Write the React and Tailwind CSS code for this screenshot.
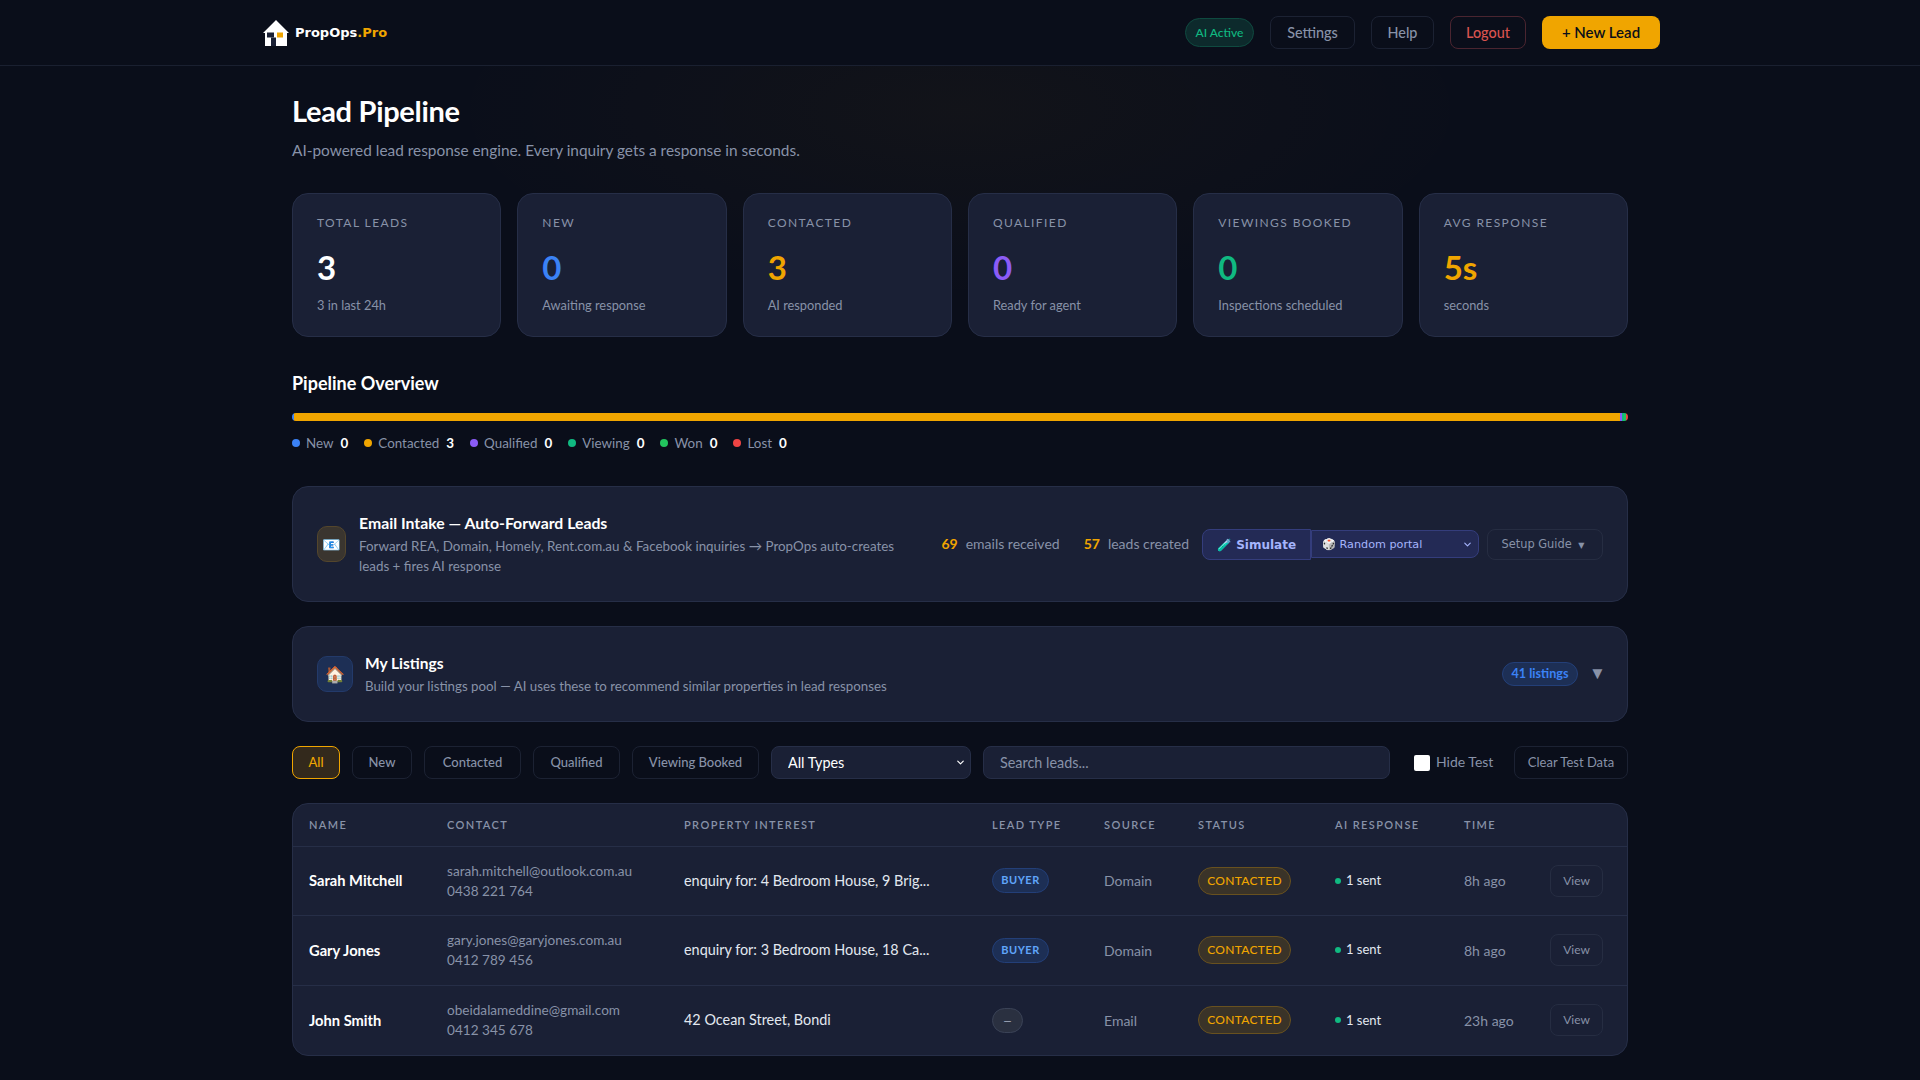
import React from "react";
import { ChevronDown } from "lucide-react";

const stats = [
  { label: "Total Leads", value: "3", sub: "3 in last 24h", color: "text-white" },
  { label: "New", value: "0", sub: "Awaiting response", color: "text-[#3b82f6]" },
  { label: "Contacted", value: "3", sub: "AI responded", color: "text-[#f0a500]" },
  { label: "Qualified", value: "0", sub: "Ready for agent", color: "text-[#8b5cf6]" },
  { label: "Viewings Booked", value: "0", sub: "Inspections scheduled", color: "text-[#10b981]" },
  { label: "Avg Response", value: "5s", sub: "seconds", color: "text-[#f0a500]" },
];

const legend = [
  { name: "New", n: 0, dot: "bg-[#3b82f6]" },
  { name: "Contacted", n: 3, dot: "bg-[#f0a500]" },
  { name: "Qualified", n: 0, dot: "bg-[#8b5cf6]" },
  { name: "Viewing", n: 0, dot: "bg-[#10b981]" },
  { name: "Won", n: 0, dot: "bg-[#22c55e]" },
  { name: "Lost", n: 0, dot: "bg-[#ef4444]" },
];

const leads = [
  { name: "Sarah Mitchell", email: "sarah.mitchell@outlook.com.au", phone: "0438 221 764", prop: "enquiry for: 4 Bedroom House, 9 Brig...", type: "BUYER", source: "Domain", time: "8h ago", h: "h-[69px]" },
  { name: "Gary Jones", email: "gary.jones@garyjones.com.au", phone: "0412 789 456", prop: "enquiry for: 3 Bedroom House, 18 Ca...", type: "BUYER", source: "Domain", time: "8h ago", h: "h-[70px]" },
  { name: "John Smith", email: "obeidalameddine@gmail.com", phone: "0412 345 678", prop: "42 Ocean Street, Bondi", type: "—", source: "Email", time: "23h ago", h: "h-[70px]" },
];

const heads = ["Name", "Contact", "Property Interest", "Lead Type", "Source", "Status", "AI Response", "Time", ""];

function Logo() {
  return (
    <svg width="26" height="26" viewBox="0 0 26 26" className="ml-[3px] shrink-0">
      <path d="M13 0 L26 13 L24 13 L24 26 L2 26 L2 13 L0 13 Z" fill="#ffffff" />
      <rect x="4" y="12.5" width="7" height="5" fill="#1a2035" />
      <rect x="8" y="17.5" width="5" height="8.5" fill="#1a2035" />
      <rect x="14" y="12.5" width="6" height="5" fill="#f0a500" />
    </svg>
  );
}

function Card({ children, className }) {
  return <div className={"rounded-2xl border border-[#262e47] bg-[#1a2035] " + className}>{children}</div>;
}

export default function App() {
  return (
    <div className="h-screen overflow-hidden bg-[#0a0e1a] bg-[radial-gradient(ellipse_520px_190px_at_50%_110px,rgba(240,165,0,0.035),transparent)] text-white [font-family:Lato,sans-serif]">
      <header className="h-[66px] border-b border-[#1a2030] bg-[#0a0e1a]">
        <div className="mx-auto flex h-full max-w-[1400px] items-center justify-between">
          <div className="flex items-center gap-[6px]">
            <Logo />
            <span className="mt-[1px] text-[13px] font-bold text-white [font-family:'DejaVu_Sans',sans-serif]">
              PropOps<span className="text-[#f0a500]">.Pro</span>
            </span>
          </div>
          <div className="flex items-center gap-4">
            <span className="flex h-[29px] w-[69px] items-center justify-center rounded-full border border-[#0f4a40] bg-[#0d2a2c] text-[12px] font-medium text-[#10b981]">AI Active</span>
            <button className="h-[33px] w-[85px] rounded-lg border border-[#1c2233] text-[14.4px] font-medium text-[#8892a8]">Settings</button>
            <button className="h-[33px] w-[63px] rounded-lg border border-[#1c2233] text-[14.4px] font-medium text-[#8892a8]">Help</button>
            <button className="h-[33px] w-[76px] rounded-lg border border-[#4a2530] text-[14.4px] font-medium text-[#d9534f]">Logout</button>
            <button className="h-[33px] w-[118px] rounded-lg bg-[#f0a500] text-[15px] font-semibold text-[#0a0e1a]">+ New Lead</button>
          </div>
        </div>
      </header>

      <main className="mx-auto max-w-[1400px] px-8">
        <h1 className="mt-[27px] text-[29px] font-bold leading-[36px] tracking-[-0.3px]">Lead Pipeline</h1>
        <p className="mt-[10px] text-[15.4px] leading-[22px] text-[#8892a8]">AI-powered lead response engine. Every inquiry gets a response in seconds.</p>

        <section className="mt-[32px] grid grid-cols-6 gap-4">
          {stats.map((s) => (
            <Card key={s.label} className="h-[144px] px-6 pt-[21px]">
              <div className="text-[12px] uppercase leading-[16px] tracking-[1.4px] text-[#8892a8]">{s.label}</div>
              <div className={"mt-[14px] text-[33px] font-bold leading-[44px] " + s.color}>{s.value}</div>
              <div className="mt-[7px] text-[12.8px] leading-[18px] text-[#8892a8]">{s.sub}</div>
            </Card>
          ))}
        </section>

        <h2 className="mt-[33px] text-[18px] font-bold leading-[26px]">Pipeline Overview</h2>
        <div className="mt-[17px] flex h-2 overflow-hidden rounded-full">
          <div className="w-[2px] bg-[#3b82f6]" />
          <div className="flex-1 bg-[#f0a500]" />
          <div className="w-[2px] bg-[#8b5cf6]" />
          <div className="w-[2px] bg-[#10b981]" />
          <div className="w-[2px] bg-[#22c55e]" />
          <div className="w-[2px] bg-[#ef4444]" />
        </div>
        <div className="mt-[12px] flex gap-4 text-[13.4px] leading-[20px]">
          {legend.map((l) => (
            <div key={l.name} className="flex items-center gap-[6px]">
              <span className={"size-2 rounded-full " + l.dot} />
              <span className="text-[#8892a8]">{l.name}</span>
              <span className="ml-[1px] font-bold text-white">{l.n}</span>
            </div>
          ))}
        </div>

        <Card className="mt-[33px] flex h-[116px] items-center gap-[13px] px-6">
          <div className="flex h-9 w-[29px] shrink-0 items-center justify-center rounded-[10px] border border-[#54462c] bg-[#3a352f] text-[15px]">📧</div>
          <div className="w-[540px] shrink-0">
            <div className="text-[15.8px] font-bold leading-[20px]">Email Intake — Auto-Forward Leads</div>
            <div className="mt-[3px] text-[13.4px] leading-[20px] text-[#8892a8]">Forward REA, Domain, Homely, Rent.com.au &amp; Facebook inquiries → PropOps auto-creates leads + fires AI response</div>
          </div>
          <div className="mb-[2px] ml-auto flex items-center gap-2 text-[14px]">
            <span className="font-bold text-[#f0a500]">69</span>
            <span className="text-[#8892a8]">emails received</span>
          </div>
          <div className="mb-[2px] ml-[11px] flex items-center gap-2 text-[14px]">
            <span className="font-bold text-[#f0a500]">57</span>
            <span className="text-[#8892a8]">leads created</span>
          </div>
          <div className="flex items-center">
            <button className="h-[31px] w-[109px] rounded-l-lg border border-[#343d7c] bg-[#232a55] pt-[1px] text-[12px] font-bold text-[#a5b4fc] [font-family:'DejaVu_Sans',sans-serif]">🧪 Simulate</button>
            <div className="relative">
              <select className="block h-[28px] w-[168px] appearance-none rounded-r-lg border border-[#343d7c] bg-[#232a55] pl-[10px] pt-[2px] text-[11.2px] text-[#a5b4fc] [font-family:'DejaVu_Sans',sans-serif]">
                <option>🎲 Random portal</option>
              </select>
              <ChevronDown size={11} strokeWidth={2.5} className="pointer-events-none absolute right-[6px] top-[9px] text-[#a5b4fc]" />
            </div>
          </div>
          <button className="-ml-[5px] h-[31px] w-[116px] rounded-lg border border-[#262d42] pr-[4px] pt-[1px] text-[11.4px] text-[#8892a8] [font-family:'DejaVu_Sans',sans-serif]">Setup Guide <span className="ml-[3px] text-[8px]">▼</span></button>
        </Card>

        <Card className="mt-[24px] flex h-[96px] items-center gap-3 px-6">
          <div className="flex size-9 shrink-0 items-center justify-center rounded-[10px] border border-[#233a6a] bg-[#1d2f55] text-[16px]">🏠</div>
          <div className="min-w-0 flex-1">
            <div className="text-[15.5px] font-bold leading-[20px]">My Listings</div>
            <div className="mt-[3px] text-[13.3px] leading-[20px] text-[#8892a8]">Build your listings pool — AI uses these to recommend similar properties in lead responses</div>
          </div>
          <span className="flex h-[24px] w-[76px] items-center justify-center rounded-full border border-[#233f78] bg-[#1d2f55] text-[12.6px] font-bold text-[#3b82f6]">41 listings</span>
          <span className="mb-[3px] ml-[2px] flex w-[11px] justify-center text-[17px] text-[#8892a8]">▼</span>
        </Card>

        <div className="mt-[24px] flex h-[33px] items-center gap-3">
          <button className="h-[33px] w-[48px] rounded-lg border border-[#f0a500] bg-[#33291c] text-[13px] font-medium text-[#f0a500]">All</button>
          <button className="h-[33px] w-[60px] rounded-lg border border-[#1c2233] text-[13px] font-medium text-[#8892a8]">New</button>
          <button className="h-[33px] w-[97px] rounded-lg border border-[#1c2233] text-[13px] font-medium text-[#8892a8]">Contacted</button>
          <button className="h-[33px] w-[87px] rounded-lg border border-[#1c2233] text-[13px] font-medium text-[#8892a8]">Qualified</button>
          <button className="h-[33px] w-[127px] rounded-lg border border-[#1c2233] text-[13px] font-medium text-[#8892a8]">Viewing Booked</button>
          <div className="relative">
            <select className="block h-[33px] w-[200px] appearance-none rounded-lg border border-[#262e47] bg-[#1a2035] pl-4 text-[14.4px] text-white">
              <option>All Types</option>
            </select>
            <ChevronDown size={11} strokeWidth={2.5} className="pointer-events-none absolute right-[5px] top-[11px] text-white" />
          </div>
          <input placeholder="Search leads..." className="h-[33px] w-[407px] rounded-lg border border-[#262e47] bg-[#1a2035] px-4 text-[14.4px] text-white placeholder:text-[#8892a8]" />
          <label className="ml-[12px] flex items-center gap-[6px] whitespace-nowrap text-[14px] text-[#8892a8]">
            <input type="checkbox" className="size-4 appearance-none rounded-[2px] bg-white" />
            <span className="-mt-[2px]">Hide Test</span>
          </label>
          <button className="ml-auto h-[33px] w-[114px] shrink-0 rounded-lg border border-[#1c2233] pt-[1px] text-[13px] text-[#8892a8]">Clear Test Data</button>
        </div>

        <div className="mt-[24px] overflow-hidden rounded-2xl border border-[#262e47] bg-[#1a2035]">
          <table className="w-full table-fixed border-collapse">
            <colgroup>
              <col className="w-[138px]" />
              <col className="w-[237px]" />
              <col className="w-[308px]" />
              <col className="w-[112px]" />
              <col className="w-[94px]" />
              <col className="w-[137px]" />
              <col className="w-[129px]" />
              <col className="w-[86px]" />
              <col />
            </colgroup>
            <thead>
              <tr className="h-[42px] border-b border-[#262e47]">
                {heads.map((h, i) => (
                  <th key={i} className="px-4 text-left text-[11px] font-semibold uppercase tracking-[1.4px] text-[#8892a8]">{h}</th>
                ))}
              </tr>
            </thead>
            <tbody>
              {leads.map((l, i) => (
                <tr key={l.name} className={l.h + (i < 2 ? " border-b border-[#262e47]" : "")}>
                  <td className="whitespace-nowrap px-4 text-[14.7px] font-bold">{l.name}</td>
                  <td className="whitespace-nowrap px-4 text-[13.6px] leading-[20px] text-[#8892a8]">
                    <div>{l.email}</div>
                    <div>{l.phone}</div>
                  </td>
                  <td className="whitespace-nowrap px-4 text-[14.4px] text-[#e2e8f0]">{l.prop}</td>
                  <td className="px-4">
                    {l.type === "BUYER" ? (
                      <span className="flex h-[25px] w-[57px] items-center justify-center rounded-full border border-[#233f78] bg-[#1d2f55] text-[11px] font-bold tracking-[0.5px] text-[#60a5fa]">BUYER</span>
                    ) : (
                      <span className="flex h-[25px] w-[31px] items-center justify-center rounded-full border border-[#3a4256] bg-[#2a3040] text-[10px] font-bold text-[#a0a8ba]">—</span>
                    )}
                  </td>
                  <td className="px-4 text-[14px] text-[#8892a8]">{l.source}</td>
                  <td className="px-4">
                    <span className="flex h-[28px] w-[93px] items-center justify-center rounded-full border border-[#68511f] bg-[#3a3328] text-[12px] font-medium tracking-[0.3px] text-[#f0a500]">CONTACTED</span>
                  </td>
                  <td className="px-4">
                    <div className="flex items-center gap-[5px] text-[13px] text-[#e2e8f0]">
                      <span className="size-[6px] rounded-full bg-[#10b981]" />
                      1 sent
                    </div>
                  </td>
                  <td className="whitespace-nowrap px-4 text-[14px] text-[#8892a8]">{l.time}</td>
                  <td className="px-4">
                    <button className="h-[32px] w-[53px] rounded-lg border border-[#262d42] text-[12px] text-[#8892a8]">View</button>
                  </td>
                </tr>
              ))}
            </tbody>
          </table>
        </div>
      </main>
    </div>
  );
}
